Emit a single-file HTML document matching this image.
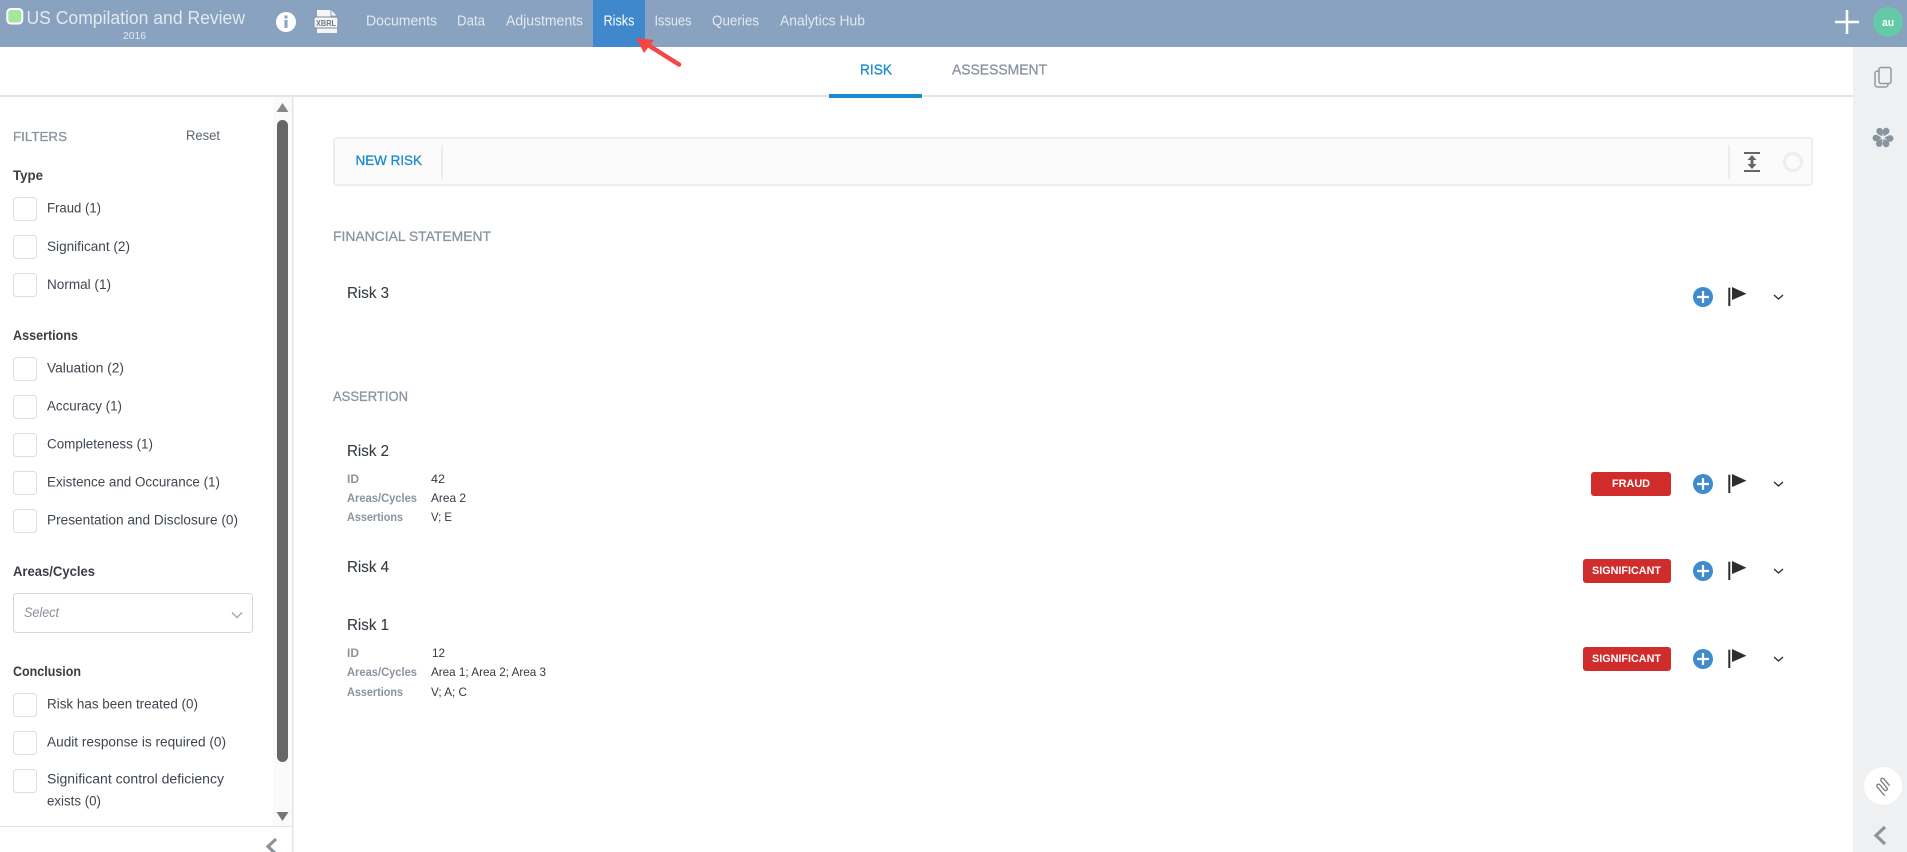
<!DOCTYPE html>
<html lang="en"><head><meta charset="utf-8"><title>US Compilation and Review - Risks</title>
<style>
html,body{margin:0;padding:0;background:#fff;width:1907px;height:852px;overflow:hidden}
svg{display:block}
text{font-family:"Liberation Sans",sans-serif}
.nav{font-size:14.5px;fill:#e4e9ef;transform:translateY(-.4px)}
.lbl{font-size:13.5px;fill:#3f464f;transform:translateY(-.5px)}
.h{font-size:14px;font-weight:bold;fill:#3a3f46;transform:translateY(-1px)}
.sec{font-size:14px;fill:#8a94a0;stroke:#8a94a0;stroke-width:.3px}
.risk{font-size:16px;fill:#333a42;stroke:#333a42;stroke-width:.1px;transform:translateY(-1px)}
.k{font-size:12px;font-weight:bold;fill:#8a94a0}
.v{font-size:12px;fill:#333a42}
.badge{font-size:11px;font-weight:bold;fill:#fff}
.cb{fill:#fff;stroke:#dadfe5;stroke-width:1}
.semi{stroke-width:.3px}
</style></head><body>
<svg xmlns="http://www.w3.org/2000/svg" width="1907" height="852" viewBox="0 0 1907 852">
<defs>
<g id="acts">
<circle cx="0" cy="0" r="10" fill="#3f8bcd"/>
<path d="M-6 0H6M0-6V6" stroke="#fff" stroke-width="2.2"/>
<rect x="25.300" y="-9.300" width="2" height="18.300" fill="#2e2e2e"/>
<path d="M29-10L43.500-3.300L29 3Z" fill="#2e2e2e"/>
<path d="M71-2L75.500 2L80-2" fill="none" stroke="#2e2e2e" stroke-width="1.400"/>
</g>
<path id="petal" d="M0-1.500C-1-3-3.300-5-3.300-7.200A3.300 3.300 0 0 1 3.300-7.200C3.300-5 1-3 0-1.500Z" fill="#8a949e"/>
</defs>
<rect width="1907" height="852" fill="#fff"/>
<!-- Top bar -->
<rect width="1907" height="47" fill="#88a2bf"/>
<rect x="593" width="52" height="47" fill="#3f88cb"/>
<rect x="7.250" y="9" width="15" height="14.500" rx="3.500" fill="#a6e59c" stroke="#fff" stroke-width="2"/>
<text x="26.500" y="24" font-size="18" fill="#e4e9ef" textLength="218.500" lengthAdjust="spacingAndGlyphs">US Compilation and Review</text>
<text x="123" y="39" font-size="10.5" fill="#e4e9ef" textLength="23" lengthAdjust="spacingAndGlyphs">2016</text>
<circle cx="286" cy="22" r="10" fill="#fff"/>
<rect x="284.500" y="20" width="3" height="8" fill="#88a2bf"/><rect x="284.500" y="15.500" width="3" height="3" fill="#88a2bf"/>
<path d="M317 10H331L337 16V33H317Z" fill="#f4f6f8"/>
<path d="M331 10V16H337" fill="none" stroke="#88a2bf" stroke-width="1"/>
<rect x="314" y="17" width="24" height="11" rx="2" fill="#f4f6f8" stroke="#7f8b99" stroke-width="1"/>
<text x="316" y="26" font-size="8.500" font-weight="bold" fill="#6f7b89" textLength="20" lengthAdjust="spacingAndGlyphs">XBRL</text>
<text class="nav" x="366" y="26" textLength="71" lengthAdjust="spacingAndGlyphs">Documents</text>
<text class="nav" x="457" y="26" textLength="28" lengthAdjust="spacingAndGlyphs">Data</text>
<text class="nav" x="506" y="26" textLength="77" lengthAdjust="spacingAndGlyphs">Adjustments</text>
<text class="nav" x="603.500" y="26" textLength="31" lengthAdjust="spacingAndGlyphs" style="fill:#fff">Risks</text>
<text class="nav" x="654.500" y="26" textLength="37" lengthAdjust="spacingAndGlyphs">Issues</text>
<text class="nav" x="712" y="26" textLength="47" lengthAdjust="spacingAndGlyphs">Queries</text>
<text class="nav" x="780" y="26" textLength="85" lengthAdjust="spacingAndGlyphs">Analytics Hub</text>
<path d="M1835 22H1859M1847 10V34" stroke="#fff" stroke-width="2.500"/>
<circle cx="1888" cy="22" r="15" fill="#63cba8"/>
<text x="1882" y="26" font-size="11" font-weight="bold" fill="#fff" textLength="12" lengthAdjust="spacingAndGlyphs">au</text>

<!-- Right side panel -->
<rect x="1853" y="47" width="54" height="805" fill="#eff0f2"/>
<rect x="1875" y="71" width="13" height="16" rx="2.500" fill="none" stroke="#8f99a3" stroke-width="1.500"/>
<rect x="1879" y="67.500" width="12" height="16" rx="2" fill="#eff0f2" stroke="#8f99a3" stroke-width="1.500"/>
<g transform="translate(1883 137.500)">
<use href="#petal" transform="rotate(-28)"/>
<use href="#petal" transform="rotate(26)"/>
<use href="#petal" transform="rotate(98)"/>
<use href="#petal" transform="rotate(154)"/>
<use href="#petal" transform="rotate(212)"/>
<use href="#petal" transform="rotate(266)"/>
</g>
<circle cx="1883" cy="786" r="19" fill="#fff"/>
<g transform="rotate(-40 1883 786)" fill="none" stroke="#777d84" stroke-width="1.300">
<path d="M1878 794.500V783a1.700 1.700 0 0 1 3.400 0V790a1.700 1.700 0 0 0 3.400 0V781a1.700 1.700 0 0 1 3.400 0V790"/>
</g>
<path d="M1885 827L1876 835.500L1885 844" fill="none" stroke="#8a949e" stroke-width="3.200"/>

<!-- Tabs -->
<rect y="95" width="1853" height="2" fill="#e5e5e5"/>
<rect x="829" y="94" width="93" height="4" fill="#1a8bce"/>
<text class="semi" x="860" y="74.500" font-size="14.500" fill="#1a8bce" stroke="#1a8bce" textLength="32" lengthAdjust="spacingAndGlyphs">RISK</text>
<text class="semi" x="952" y="74.500" font-size="14.500" fill="#8a94a0" stroke="#8a94a0" textLength="95" lengthAdjust="spacingAndGlyphs">ASSESSMENT</text>

<!-- Left filter panel -->
<rect x="273" y="97" width="19" height="729" fill="#fafafa"/>
<rect x="292" y="97" width="1.500" height="755" fill="#e5e5e5"/>
<rect x="277" y="120" width="11" height="642" rx="5.500" fill="#666"/>
<path d="M276.500 112L282.500 103L288.500 112Z" fill="#888"/>
<path d="M276.500 812L282.500 821L288.500 812Z" fill="#777"/>
<rect y="826" width="292" height="1" fill="#e3e3e3"/>
<path d="M276 839L268 846.500L276 854" fill="none" stroke="#8a949e" stroke-width="3.200"/>

<text class="semi" x="13" y="141" font-size="13" fill="#8a94a0" stroke="#8a94a0" textLength="54" lengthAdjust="spacingAndGlyphs">FILTERS</text>
<text x="186" y="140" font-size="13.500" fill="#5b636c" textLength="34" lengthAdjust="spacingAndGlyphs">Reset</text>

<text class="h" x="13" y="181" textLength="30" lengthAdjust="spacingAndGlyphs">Type</text>
<rect class="cb" x="13.500" y="197.500" width="23" height="23" rx="3"/>
<text class="lbl" x="47" y="213" textLength="54" lengthAdjust="spacingAndGlyphs">Fraud (1)</text>
<rect class="cb" x="13.500" y="235.500" width="23" height="23" rx="3"/>
<text class="lbl" x="47" y="251.500" textLength="83" lengthAdjust="spacingAndGlyphs">Significant (2)</text>
<rect class="cb" x="13.500" y="273.500" width="23" height="23" rx="3"/>
<text class="lbl" x="47" y="289.500" textLength="64" lengthAdjust="spacingAndGlyphs">Normal (1)</text>

<text class="h" x="13" y="341" textLength="65" lengthAdjust="spacingAndGlyphs">Assertions</text>
<rect class="cb" x="13.500" y="357.500" width="23" height="23" rx="3"/>
<text class="lbl" x="47" y="373" textLength="77" lengthAdjust="spacingAndGlyphs">Valuation (2)</text>
<rect class="cb" x="13.500" y="395.500" width="23" height="23" rx="3"/>
<text class="lbl" x="47" y="411" textLength="75" lengthAdjust="spacingAndGlyphs">Accuracy (1)</text>
<rect class="cb" x="13.500" y="433.500" width="23" height="23" rx="3"/>
<text class="lbl" x="47" y="449" textLength="106" lengthAdjust="spacingAndGlyphs">Completeness (1)</text>
<rect class="cb" x="13.500" y="471.500" width="23" height="23" rx="3"/>
<text class="lbl" x="47" y="487" textLength="173" lengthAdjust="spacingAndGlyphs">Existence and Occurance (1)</text>
<rect class="cb" x="13.500" y="509.500" width="23" height="23" rx="3"/>
<text class="lbl" x="47" y="525" textLength="191" lengthAdjust="spacingAndGlyphs">Presentation and Disclosure (0)</text>

<text class="h" x="13" y="577" textLength="82" lengthAdjust="spacingAndGlyphs">Areas/Cycles</text>
<rect x="13.500" y="593.500" width="239" height="39" rx="3" fill="#fff" stroke="#d5d8dc"/>
<text x="24" y="617" font-size="13.500" font-style="italic" fill="#8a9099" textLength="35" lengthAdjust="spacingAndGlyphs">Select</text>
<path d="M232 612.500L237 617.500L242 612.500" fill="none" stroke="#a5aab0" stroke-width="1.500"/>

<text class="h" x="13" y="677" textLength="68" lengthAdjust="spacingAndGlyphs">Conclusion</text>
<rect class="cb" x="13.500" y="693.500" width="23" height="23" rx="3"/>
<text class="lbl" x="47" y="709" textLength="151" lengthAdjust="spacingAndGlyphs">Risk has been treated (0)</text>
<rect class="cb" x="13.500" y="731.500" width="23" height="23" rx="3"/>
<text class="lbl" x="47" y="747" textLength="179" lengthAdjust="spacingAndGlyphs">Audit response is required (0)</text>
<rect class="cb" x="13.500" y="769.500" width="23" height="23" rx="3"/>
<text class="lbl" x="47" y="784" textLength="177" lengthAdjust="spacingAndGlyphs">Significant control deficiency</text>
<text class="lbl" x="47" y="806" textLength="54" lengthAdjust="spacingAndGlyphs">exists (0)</text>

<!-- Toolbar -->
<rect x="334" y="138" width="1478" height="47" rx="2.500" fill="#fbfbfb" stroke="#eeeeee" stroke-width="2"/>
<text class="semi" x="355.500" y="165" font-size="14" fill="#1a8bce" stroke="#1a8bce" textLength="66.500" lengthAdjust="spacingAndGlyphs">NEW RISK</text>
<rect x="441" y="145" width="2" height="34" fill="#ececec"/>
<rect x="1728" y="145" width="2" height="34" fill="#ececec"/>
<path d="M1744 153H1760M1744 171H1760" stroke="#666" stroke-width="2"/>
<path d="M1752 157V167" stroke="#666" stroke-width="2.800"/>
<path d="M1747.500 160L1752 155L1756.500 160ZM1747.500 164L1752 169L1756.500 164Z" fill="#666"/>
<circle cx="1793" cy="162" r="8.500" fill="none" stroke="#eee" stroke-width="3.200"/>

<!-- Content -->
<text class="sec" x="333" y="241" textLength="158" lengthAdjust="spacingAndGlyphs">FINANCIAL STATEMENT</text>
<text class="risk" x="347" y="299" textLength="42" lengthAdjust="spacingAndGlyphs">Risk 3</text>
<use href="#acts" x="1703" y="297"/>

<text class="sec" x="333" y="401" textLength="75" lengthAdjust="spacingAndGlyphs">ASSERTION</text>

<text class="risk" x="347" y="457" textLength="42" lengthAdjust="spacingAndGlyphs">Risk 2</text>
<text class="k" x="347" y="483" textLength="12" lengthAdjust="spacingAndGlyphs">ID</text>
<text class="v" x="431" y="483" textLength="14" lengthAdjust="spacingAndGlyphs">42</text>
<text class="k" x="347" y="502" textLength="70" lengthAdjust="spacingAndGlyphs">Areas/Cycles</text>
<text class="v" x="431" y="502" textLength="35" lengthAdjust="spacingAndGlyphs">Area 2</text>
<text class="k" x="347" y="521" textLength="56" lengthAdjust="spacingAndGlyphs">Assertions</text>
<text class="v" x="431" y="521" textLength="21" lengthAdjust="spacingAndGlyphs">V; E</text>
<rect x="1591" y="472" width="80" height="24" rx="3" fill="#d12c2c"/>
<text class="badge" x="1612" y="487" textLength="38" lengthAdjust="spacingAndGlyphs">FRAUD</text>
<use href="#acts" x="1703" y="484"/>

<text class="risk" x="347" y="573" textLength="42" lengthAdjust="spacingAndGlyphs">Risk 4</text>
<rect x="1583" y="559" width="88" height="24" rx="3" fill="#d12c2c"/>
<text class="badge" x="1592" y="574" textLength="69" lengthAdjust="spacingAndGlyphs">SIGNIFICANT</text>
<use href="#acts" x="1703" y="571"/>

<text class="risk" x="347" y="631" textLength="42" lengthAdjust="spacingAndGlyphs">Risk 1</text>
<text class="k" x="347" y="657" textLength="12" lengthAdjust="spacingAndGlyphs">ID</text>
<text class="v" x="432" y="657" textLength="13" lengthAdjust="spacingAndGlyphs">12</text>
<text class="k" x="347" y="676" textLength="70" lengthAdjust="spacingAndGlyphs">Areas/Cycles</text>
<text class="v" x="431" y="676" textLength="115" lengthAdjust="spacingAndGlyphs">Area 1; Area 2; Area 3</text>
<text class="k" x="347" y="696" textLength="56" lengthAdjust="spacingAndGlyphs">Assertions</text>
<text class="v" x="431" y="696" textLength="36" lengthAdjust="spacingAndGlyphs">V; A; C</text>
<rect x="1583" y="647" width="88" height="24" rx="3" fill="#d12c2c"/>
<text class="badge" x="1592" y="662" textLength="69" lengthAdjust="spacingAndGlyphs">SIGNIFICANT</text>
<use href="#acts" x="1703" y="659"/>

<!-- Red annotation arrow -->
<path d="M679 64.500L648 45" stroke="#f54545" stroke-width="4.500" stroke-linecap="round"/>
<path d="M636 38L654 40L644 53Z" fill="#f54545"/>
</svg>
</body></html>
